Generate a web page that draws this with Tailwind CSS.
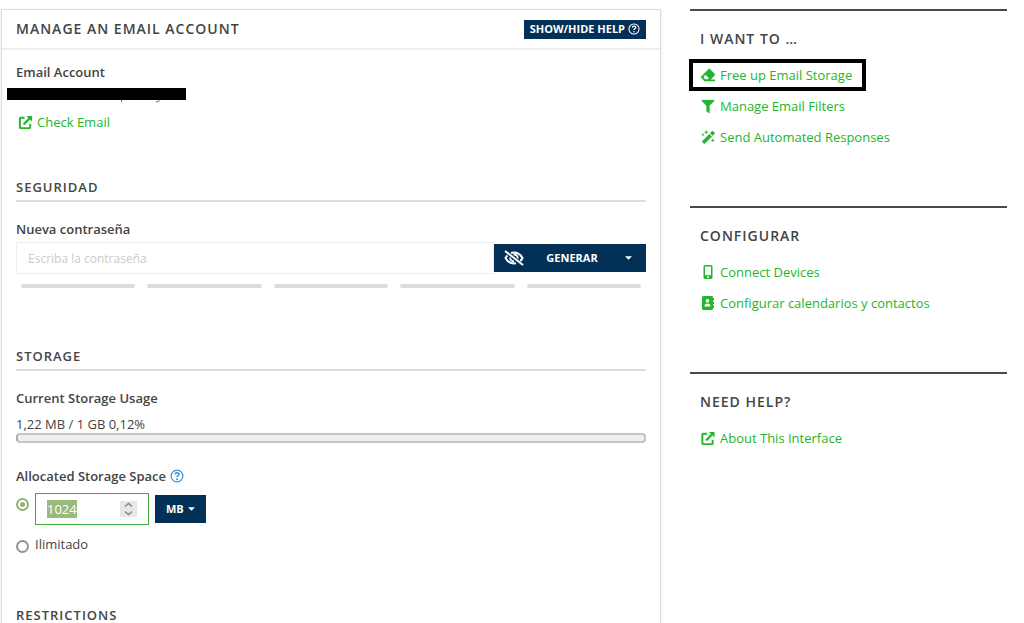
<!DOCTYPE html>
<html lang="en">
<head>
    <meta charset="UTF-8">
    <meta name="viewport" content="width=device-width, initial-scale=1.0">
    <title>Manage an Email Account</title>
    <script src="https://cdn.jsdelivr.net/npm/@tailwindcss/browser@4"></script>
</head>
<body class="bg-white font-['Open_Sans','Noto_Sans',sans-serif] text-[13px] leading-5 text-[#444] overflow-x-hidden">
    <!-- Shared icons -->
    <svg class="hidden">
        <symbol id="external" viewBox="0 0 16 16">
            <path d="M7 3H3Q2 3 2 4v9q0 1 1 1h9q1 0 1-1V9.500" fill="none" stroke="currentColor" stroke-width="2.100"/>
            <path d="M6 10l7-7" fill="none" stroke="currentColor" stroke-width="2.300"/>
            <path d="M9 1H15v6z" fill="currentColor"/>
        </symbol>
        <symbol id="help" viewBox="0 0 14 14">
            <circle cx="7" cy="7" r="5.900" fill="none" stroke="currentColor" stroke-width="1.200"/>
            <path d="M5 5.400C5.200 3.200 9 3.200 9 5.300 9 6.800 7 6.600 7 8.200" fill="none" stroke="currentColor" stroke-width="1.500"/>
            <circle cx="7" cy="10.200" r="0.950" fill="currentColor"/>
        </symbol>
        <symbol id="caret" viewBox="0 0 8 4">
            <path d="M0 0h8L4 4z" fill="currentColor"/>
        </symbol>
    </svg>

    <div class="grid grid-cols-[660fr_317fr] gap-[29px] pl-px pr-[17px] pt-[9px]">
        <main class="border border-b-0 border-[#ddd] shadow-sm">
            <header class="flex items-center justify-between h-10 px-[14px] border-b-2 border-[#eee]">
                <h1 class="font-semibold tracking-[1px] text-[14px]">MANAGE AN EMAIL ACCOUNT</h1>
                <button class="flex items-center gap-[3px] h-[19px] px-[6px] bg-[#033056] text-white text-[11px] font-bold">
                    SHOW/HIDE HELP
                    <svg class="size-3"><use href="#help"/></svg>
                </button>
            </header>

            <div class="px-[14px] pt-3">
                <h2 class="font-semibold">Email Account</h2>
                <!-- Account name, blacked out -->
                <div class="pt-[6px] h-[30px] -ml-[9px]">
                    <div class="w-[179px] h-3 bg-black"></div>
                    <svg class="w-[179px] h-1" viewBox="0 0 179 4" fill="none" stroke="#666"><path d="M114.500 0v2M152.500 0q-.5 2-3.500 2"/></svg>
                </div>
                <a href="#" class="flex w-fit items-center gap-1 pl-[2px] text-[#22b62d]">
                    <svg class="size-[15px]"><use href="#external"/></svg>
                    Check Email
                </a>

                <section class="mt-[45px]">
                    <h2 class="pb-[3px] border-b-2 border-[#ddd] font-semibold tracking-[1px]">SEGURIDAD</h2>
                    <label for="password" class="block mt-[17px] font-semibold">Nueva contraseña</label>
                    <div class="flex items-center mt-[3px]">
                        <input type="password" id="password" placeholder="Escriba la contraseña" class="grow min-w-0 h-8 px-[11px] border border-[#eee] text-[12px] placeholder:text-[#ccc]">
                        <div class="flex h-7 w-[152px] bg-[#033056] text-white">
                            <button aria-label="Show password" class="w-10 grid place-items-center">
                                <svg class="w-5 h-4" viewBox="0 0 20 16" fill="none" stroke="currentColor">
                                    <path d="M3.500 5.500Q2 7 1.500 8q3 5.500 8.500 5.500l2-.3M7 3q1.500-.5 3-.5 5.500 0 8.500 5.500-.7 1.500-2.200 3" stroke-width="2"/>
                                    <path d="M6 7.500q.3 3.500 4 4M9.500 4.500q4-.3 4.300 4" stroke-width="1.800"/>
                                    <path d="M1 1l18 14" stroke-width="2"/>
                                </svg>
                            </button>
                            <button class="grow text-[11px] font-bold">GENERAR</button>
                            <button aria-label="More options" class="w-9 grid place-items-center">
                                <svg class="w-[7px] h-1"><use href="#caret"/></svg>
                            </button>
                        </div>
                    </div>
                    <div class="grid grid-cols-5 gap-3 px-[5px] mt-[10px]">
                        <div class="h-1 rounded-full bg-[#dcdcdc]"></div>
                        <div class="h-1 rounded-full bg-[#dcdcdc]"></div>
                        <div class="h-1 rounded-full bg-[#dcdcdc]"></div>
                        <div class="h-1 rounded-full bg-[#dcdcdc]"></div>
                        <div class="h-1 rounded-full bg-[#dcdcdc]"></div>
                    </div>
                </section>

                <section class="mt-[58px]">
                    <h2 class="pb-[3px] border-b-2 border-[#ddd] font-semibold tracking-[1px]">STORAGE</h2>
                    <h3 class="mt-[17px] font-semibold">Current Storage Usage</h3>
                    <p class="mt-[7px] leading-[18px]">1,22 MB / 1 GB 0,12%</p>
                    <div class="h-[10px] border-2 border-[#c4c4c4] border-l-[#9fb8a4] rounded bg-[#f0f0f0]"></div>

                    <h3 class="flex items-center gap-1 mt-[23px] font-semibold">
                        Allocated Storage Space
                        <svg class="size-[14px] text-[#3a8fd0]"><use href="#help"/></svg>
                    </h3>
                    <div class="flex mt-[7px]">
                        <input type="radio" name="quota" id="limited" aria-label="Limited" checked class="appearance-none size-[13px] mt-[5px] rounded-full border-2 border-[#93b078] bg-[#93b078] bg-clip-content p-[2px]">
                        <div class="relative w-[114px] h-8 ml-[6px]">
                            <input type="number" id="quota" value="1024" aria-label="Storage space" class="w-full h-full px-[11px] border border-[#3fae3f] outline-none [appearance:textfield] selection:bg-[#9ab97d] selection:text-white">
                            <svg class="absolute right-3 top-2 w-[17px] h-4 bg-[#e6e6eb]" viewBox="0 0 17 16" fill="none" stroke="#888" stroke-width="1.500">
                                <path d="M5 5.500l3.500-3 3.500 3M5 10.500l3.500 3 3.500-3"/>
                            </svg>
                        </div>
                        <div class="relative self-center ml-[6px] text-white">
                            <select aria-label="Unit" class="block appearance-none w-[51px] h-7 pl-[11px] bg-[#033056] text-[11px] font-bold">
                                <option>MB</option>
                            </select>
                            <svg class="absolute right-[11px] top-3 w-[7px] h-1 pointer-events-none"><use href="#caret"/></svg>
                        </div>
                    </div>
                    <label class="flex items-center gap-[6px] mt-[9px]">
                        <input type="radio" name="quota" class="appearance-none size-[13px] mt-1 rounded-full border-2 border-[#92929c]">
                        Ilimitado
                    </label>
                </section>

                <section class="mt-[51px]">
                    <h2 class="font-semibold tracking-[1px]">RESTRICTIONS</h2>
                </section>
            </div>
        </main>

        <aside class="flex flex-col gap-[59px]">
            <section class="border-t-2 border-[#4a4a4d] pt-[18px] px-[10px]">
                <h2 class="font-semibold tracking-[1px] text-[14px] leading-5">I WANT TO …</h2>
                <ul class="flex flex-col items-start gap-[11px] mt-4 text-[#22b62d]">
                    <li class="relative">
                        <a href="#" class="flex items-center gap-1">
                            <svg class="w-4 h-[14px]" viewBox="0 0 512 512" fill="currentColor"><path fill-rule="evenodd" d="M497.941 273.941c18.745-18.745 18.745-49.137 0-67.882l-160-160c-18.745-18.745-49.136-18.746-67.883 0l-256 256c-18.745 18.745-18.745 49.137 0 67.882l96 96A48.004 48.004 0 0 0 144 480h356c6.627 0 12-5.373 12-12v-40c0-6.627-5.373-12-12-12H355.883l142.058-142.059zM165 250L285 370L240 412H155L88 340z"/></svg>
                            Free up Email Storage
                        </a>
                        <div class="absolute -left-[11px] -right-[14px] -inset-y-[6px] border-4 border-black pointer-events-none"></div>
                    </li>
                    <li>
                        <a href="#" class="flex items-center gap-1">
                            <svg class="w-4 h-[13px]" viewBox="0 0 512 512" fill="currentColor"><path d="M487.976 0H24.028C2.710 0-8.047 25.866 7.058 40.971L192 225.941V432c0 7.831 3.821 15.170 10.237 19.662l80 55.980C298.020 518.690 320 507.493 320 487.980V225.941l184.947-184.970C520.021 25.896 509.338 0 487.976 0z"/></svg>
                            Manage Email Filters
                        </a>
                    </li>
                    <li>
                        <a href="#" class="flex items-center gap-1">
                            <svg class="w-4 h-[14px]" viewBox="0 0 16 16" fill="currentColor">
                                <path d="M1.500 12.500L9.500 4.500l3 3-8 8q-.7.500-1.400 0L1.500 13.900q-.5-.7 0-1.400zM10.300 3.700l2.200-2.200q.7-.5 1.400 0l1.600 1.600q.5.700 0 1.400l-2.200 2.200z"/>
                                <path d="M6 0l.7 1.800 1.800.7-1.800.7L6 5l-.7-1.800-1.800-.7 1.800-.7zM2.200 3.500l.6 1.400 1.400.6-1.400.6-.6 1.400-.6-1.400L.2 5.500l1.400-.6zM13.500 9.500l.6 1.700 1.700.6-1.700.7-.6 1.700-.7-1.700-1.600-.7 1.600-.6z"/>
                            </svg>
                            Send Automated Responses
                        </a>
                    </li>
                </ul>
            </section>

            <section class="border-t-2 border-[#4a4a4d] pt-[18px] px-[10px]">
                <h2 class="font-semibold tracking-[1px] text-[14px] leading-5">CONFIGURAR</h2>
                <ul class="flex flex-col items-start gap-[11px] mt-4 text-[#22b62d]">
                    <li>
                        <a href="#" class="flex items-center gap-1">
                            <svg class="w-4 h-[14px]" viewBox="0 0 16 14"><path fill="currentColor" fill-rule="evenodd" d="M5 0h6q1.500 0 1.500 1.500v11Q12.500 14 11 14H5q-1.500 0-1.500-1.500v-11Q3.500 0 5 0zM5 1.500v8.800h6V1.500zM8 11.300a.9.900 0 1 0 .01 0z"/></svg>
                            Connect Devices
                        </a>
                    </li>
                    <li>
                        <a href="#" class="flex items-center gap-1">
                            <svg class="w-4 h-[14px]" viewBox="0 0 16 14">
                                <path fill="currentColor" d="M3.500 0h8Q13 0 13 1.500v11q0 1.500-1.500 1.500h-8Q2 14 2 12.500v-11Q2 0 3.500 0zM13 2h1v2.500h-1zM13 5.700h1v2.500h-1zM13 9.500h1V12h-1z"/>
                                <path fill="#fff" d="M7.500 3a1.800 1.800 0 1 1-.01 0zM4.500 10.500q0-3 3-3t3 3z"/>
                            </svg>
                            Configurar calendarios y contactos
                        </a>
                    </li>
                </ul>
            </section>

            <section class="border-t-2 border-[#4a4a4d] pt-[18px] px-[10px]">
                <h2 class="font-semibold tracking-[1px] text-[14px] leading-5">NEED HELP?</h2>
                <ul class="flex flex-col items-start mt-4 text-[#22b62d]">
                    <li>
                        <a href="#" class="flex items-center gap-1">
                            <svg class="w-4 h-[15px]"><use href="#external"/></svg>
                            About This Interface
                        </a>
                    </li>
                </ul>
            </section>
        </aside>
    </div>

    <script>
        // Start with the quota selected so it can be typed over
        const quota = document.getElementById('quota');
        quota.focus({ preventScroll: true });
        quota.select();
        window.scrollTo(0, 0);
    </script>
</body>
</html>
